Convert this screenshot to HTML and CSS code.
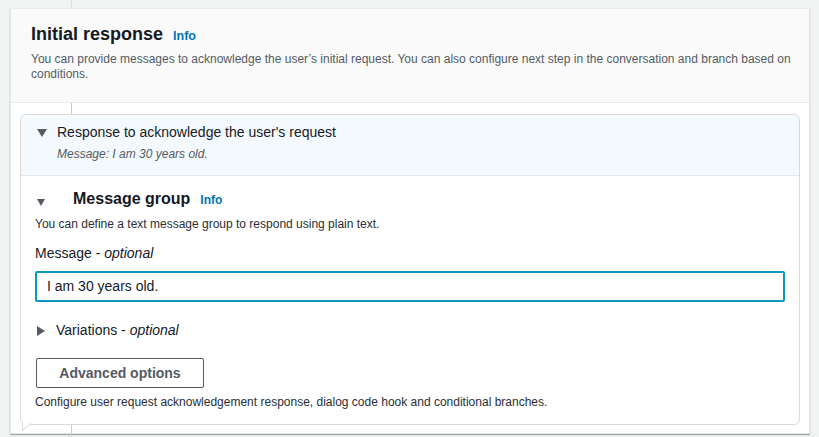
FILE: index.html
```html
<!DOCTYPE html>
<html>
<head>
<meta charset="utf-8">
<link rel="stylesheet" href="styles.css">
</head>
<body>
<div class="connector-dots"></div>
<div class="connector"></div>
<div class="panel">
  <div class="panel-header">
    <div class="title-row"><h2 class="title">Initial response</h2><a class="info info-lg">Info</a></div>
    <p class="desc">You can provide messages to acknowledge the user’s initial request. You can also configure next step in the conversation and branch based on conditions.</p>
  </div>
  <div class="panel-body">
    <div class="card">
      <div class="card-head">
        <div class="row"><span class="caret-down"></span><span class="head-title">Response to acknowledge the user's request</span></div>
        <div class="head-sub">Message: I am 30 years old.</div>
      </div>
      <div class="card-body">
        <div class="group-row"><span class="caret-down caret-group"></span><h3 class="group-title">Message group</h3><a class="info">Info</a></div>
        <p class="small gap-a">You can define a text message group to respond using plain text.</p>
        <label class="label">Message - <i>optional</i></label>
        <div class="input">I am 30 years old.</div>
        <div class="row variations"><span class="caret-right"></span><span class="var-text">Variations - <i>optional</i></span></div>
        <button class="btn">Advanced options</button>
        <p class="small foot">Configure user request acknowledgement response, dialog code hook and conditional branches.</p>
      </div>
      <svg class="tail" width="14" height="10" viewBox="0 0 14 10"><path d="M0.5 0 L0.5 8.5 L9 1" fill="#fff" stroke="#d5dbdb" stroke-width="1"/></svg>
    </div>
  </div>
</div>
</body>
</html>
```

FILE: styles.css
```css
* { box-sizing: border-box; }
html, body { margin: 0; padding: 0; }
body {
  width: 819px;
  height: 437px;
  overflow: hidden;
  background: #f2f3f3;
  font-family: "Liberation Sans", Arial, sans-serif;
  color: #16191f;
  position: relative;
  padding: 8px 9px 0 10px;
}
.connector-dots {
  position: absolute;
  left: 71px;
  top: 0;
  height: 9px;
  border-left: 1px dotted #a8dce6;
}
.connector {
  position: absolute;
  z-index: 1;
  left: 71px;
  top: 100px;
  height: 337px;
  width: 1px;
  background: #a3dbe6;
}
.panel {
  position: relative;
  width: 800px;
  height: 426px;
  background: #fff;
  border: 1px solid #e3e6e6;
  border-top-color: #eaeded;
  box-shadow: 0 1px 1px rgba(0, 28, 36, 0.35);
  display: flex;
  flex-direction: column;
}
.panel-header {
  position: relative;
  z-index: 2;
  background: #fafafa;
  border-bottom: 1px solid #eaeded;
  padding: 14px 14px 0 20px;
  height: 94px;
}
.title-row { display: flex; align-items: baseline; }
.title {
  margin: 0;
  font-size: 18px;
  line-height: 22px;
  font-weight: 700;
}
.info {
  color: #0073bb;
  font-weight: 700;
  font-size: 12px;
  margin-left: 10px;
}
.info-lg { font-size: 12.5px; }
.desc {
  margin: 7px 0 0 0;
  font-size: 12px;
  line-height: 15px;
  color: #545b64;
}
.panel-body {
  flex: 1;
  padding: 11px 9px 0 9px;
}
.card {
  position: relative;
  z-index: 2;
  height: 311px;
  border: 1px solid #d5dbdb;
  border-radius: 6px;
  background: #fff;
}
.card-head {
  background: #f4f9fd;
  border-bottom: 1px solid #e3e9ec;
  border-radius: 6px 6px 0 0;
  height: 61px;
  padding: 7px 0 0 16px;
}
.row { display: flex; align-items: center; }
.caret-down {
  width: 0; height: 0;
  border-left: 5px solid transparent;
  border-right: 5px solid transparent;
  border-top: 8px solid #545b64;
  margin-right: 10px;
  margin-top: 2px;
}
.caret-right {
  width: 0; height: 0;
  border-top: 5px solid transparent;
  border-bottom: 5px solid transparent;
  border-left: 8px solid #545b64;
  margin-right: 11px;
  margin-top: 2px;
}
.head-title { font-size: 14px; line-height: 20px; }
.head-sub {
  margin: 4px 0 0 20px;
  font-size: 12px;
  line-height: 16px;
  font-style: italic;
  color: #545b64;
}
.card-body { padding: 13px 14px 0 14px; }
.group-row { display: flex; align-items: center; height: 20px; }
.caret-group {
  margin-left: 2px;
  margin-right: 28px;
  margin-top: 7px;
  border-left-width: 4.5px;
  border-right-width: 4.5px;
  border-top-width: 7px;
}
.group-title {
  margin: 0;
  font-size: 16px;
  line-height: 20px;
  font-weight: 700;
}
.group-row .info { margin-left: 10px; margin-top: 2px; }
.small {
  margin: 0;
  font-size: 12px;
  line-height: 16px;
  color: #545b64;
}
.gap-a { margin-top: 7px; color: #2a2e35; }
.label {
  display: block;
  margin-top: 11px;
  font-size: 14px;
  line-height: 20px;
}
.input {
  margin-top: 8px;
  height: 31px;
  border: 2px solid #0a98c0;
  border-radius: 2px;
  padding: 0 0 0 10px;
  font-size: 14px;
  line-height: 27px;
  width: 750px;
}
.variations { margin-top: 18px; height: 20px; }
.caret-right { margin-left: 2px; }
.var-text { font-size: 14px; line-height: 20px; color: #16191f; }
.btn {
  display: block;
  margin-top: 18px;
  margin-left: 1px;
  width: 168px;
  height: 30px;
  border: 1px solid #545b64;
  border-radius: 2px;
  background: #fff;
  font-family: "Liberation Sans", Arial, sans-serif;
  font-weight: 700;
  font-size: 14px;
  color: #545b64;
  padding: 0;
}
.foot { margin-top: 6px; color: #2a2e35; }
.tail {
  position: absolute;
  left: 1px;
  bottom: -8px;
}
```
